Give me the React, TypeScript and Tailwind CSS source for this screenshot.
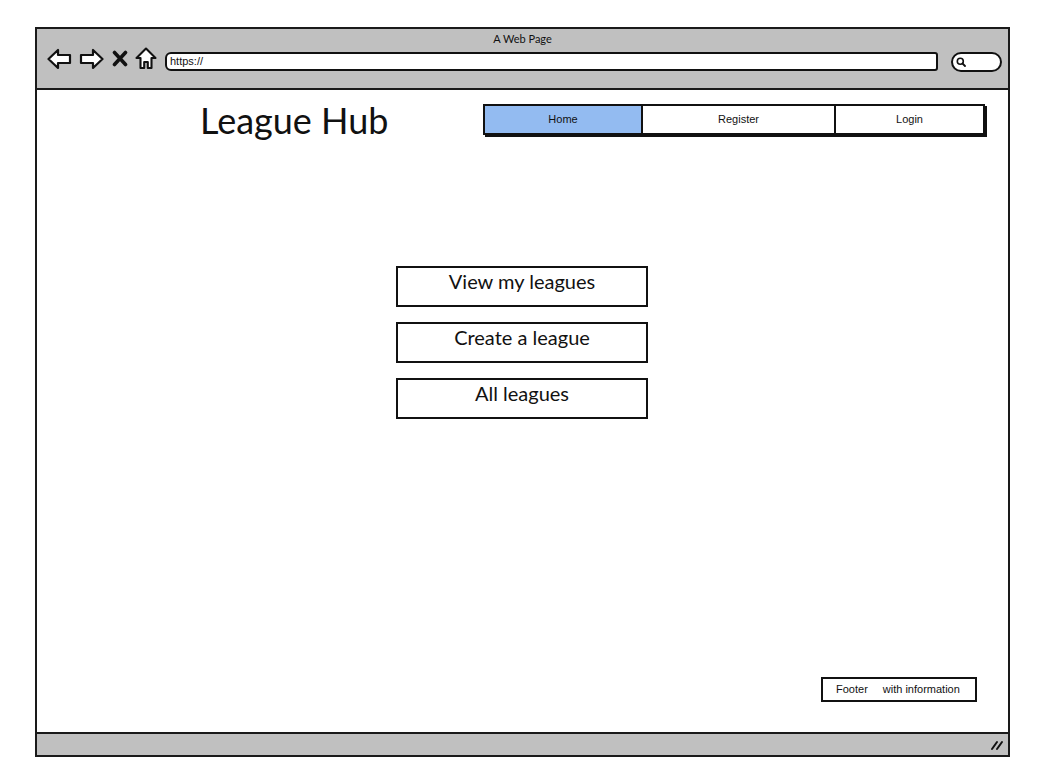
import React from "react";

const sketch = "font-['Lato','Open_Sans',sans-serif]";
const small = "font-['Liberation_Sans','Arial',sans-serif]";

function BackIcon({ flip = false }: { flip?: boolean }) {
  return (
    <svg width="25" height="22" viewBox="0 0 25 22" className={flip ? "-scale-x-100" : ""}>
      <polygon
        points="1.5,11 11,2 11,7 23,7 23,15 11,15 11,20"
        fill="white"
        stroke="#111"
        strokeWidth="2.2"
        strokeLinejoin="round"
      />
    </svg>
  );
}

function XIcon() {
  return (
    <svg width="16" height="17" viewBox="0 0 16 17">
      <path d="M2.5 2.5 L13.5 14.5 M13.5 2.5 L2.5 14.5" stroke="#111" strokeWidth="3.6" strokeLinecap="round" />
    </svg>
  );
}

function HomeIcon() {
  return (
    <svg width="22" height="23" viewBox="0 0 22 23">
      <polygon
        points="11,1.5 20.5,11 16.5,11 16.5,21 12.8,21 12.8,15 9.2,15 9.2,21 5.5,21 5.5,11 1.5,11"
        fill="white"
        stroke="#111"
        strokeWidth="2.1"
        strokeLinejoin="round"
      />
    </svg>
  );
}

function SearchPill() {
  return (
    <div className="w-[51px] h-[20px] rounded-full border-2 border-[#111] bg-white flex items-center pl-[3px]">
      <svg width="10" height="10" viewBox="0 0 10 10">
        <circle cx="4.3" cy="4.3" r="3" fill="none" stroke="#111" strokeWidth="1.6" />
        <path d="M6.5 6.5 L9 9" stroke="#111" strokeWidth="1.8" strokeLinecap="round" />
      </svg>
    </div>
  );
}

function BigButton({ label }: { label: string }) {
  return (
    <div
      className={`w-[252px] h-[41px] border-2 border-[#111] bg-white flex justify-center items-start text-[20px] leading-[26px] text-[#111] ${sketch}`}
    >
      {label}
    </div>
  );
}

export default function App() {
  return (
    <div className="w-[1043px] h-[779px] bg-white pt-[27px] pl-[35px]">
      <div className="w-[975px] h-[730px] border-2 border-[#1a1a1a] flex flex-col bg-white">
        {/* Browser top bar */}
        <div className="h-[61px] bg-[#c0c0c0] border-b-2 border-[#1a1a1a] flex flex-col">
          <div className={`text-center text-[11px] leading-[14px] pt-[3px] text-[#111] ${sketch}`}>A Web Page</div>
          <div className="flex items-start mt-[1px] pl-[10px]">
            <div className="flex items-center h-[23px]">
              <BackIcon />
              <div className="w-[7px]" />
              <BackIcon flip />
              <div className="w-[8px]" />
              <XIcon />
              <div className="w-[7px]" />
              <HomeIcon />
            </div>
            <div className="w-[8px]" />
            <div className="mt-[5px] w-[773px] h-[19px] bg-white border-2 border-[#111] rounded-l-[6px] rounded-r-[3px] flex items-center pl-[3px]">
              <span className={`text-[11px] leading-none text-[#111] ${small}`}>https://</span>
            </div>
            <div className="w-[13px]" />
            <div className="mt-[5px]">
              <SearchPill />
            </div>
          </div>
        </div>

        {/* Content */}
        <div className="flex-1 flex flex-col">
          <div className="flex items-start pt-[10px]">
            <div className={`ml-[163px] w-[283px] text-[36px] leading-[40px] text-[#111] ${sketch}`}>League Hub</div>
            <div className="mt-[4px] flex h-[31px] border-2 border-[#111] shadow-[2px_2px_0_#111] text-[11px] text-[#111]">
              <div className={`w-[156px] bg-[#93bbf1] flex items-center justify-center ${small}`}>Home</div>
              <div className={`w-[193px] border-l-2 border-[#111] bg-white flex items-center justify-center ${small}`}>Register</div>
              <div className={`w-[149px] border-l-2 border-[#111] bg-white flex items-center justify-center ${small}`}>Login</div>
            </div>
          </div>

          <div className="flex flex-col items-start gap-[15px] mt-[126px] ml-[359px]">
            <BigButton label="View my leagues" />
            <BigButton label="Create a league" />
            <BigButton label="All leagues" />
          </div>

          <div className="mt-auto mb-[30px] self-end mr-[31px]">
            <div className={`w-[156px] h-[25px] border-2 border-[#111] flex items-center pl-[13px] text-[11px] text-[#111] ${small}`}>
              <span>Footer</span>
              <span className="ml-[15px]">with information</span>
            </div>
          </div>
        </div>

        {/* Bottom bar */}
        <div className="h-[23px] bg-[#c0c0c0] border-t-2 border-[#1a1a1a] flex items-center justify-end pr-[4px]">
          <svg width="14" height="12" viewBox="0 0 14 12">
            <path d="M2 10 L7 3 M7 10 L12 3" stroke="#111" strokeWidth="2" strokeLinecap="round" />
          </svg>
        </div>
      </div>
    </div>
  );
}
